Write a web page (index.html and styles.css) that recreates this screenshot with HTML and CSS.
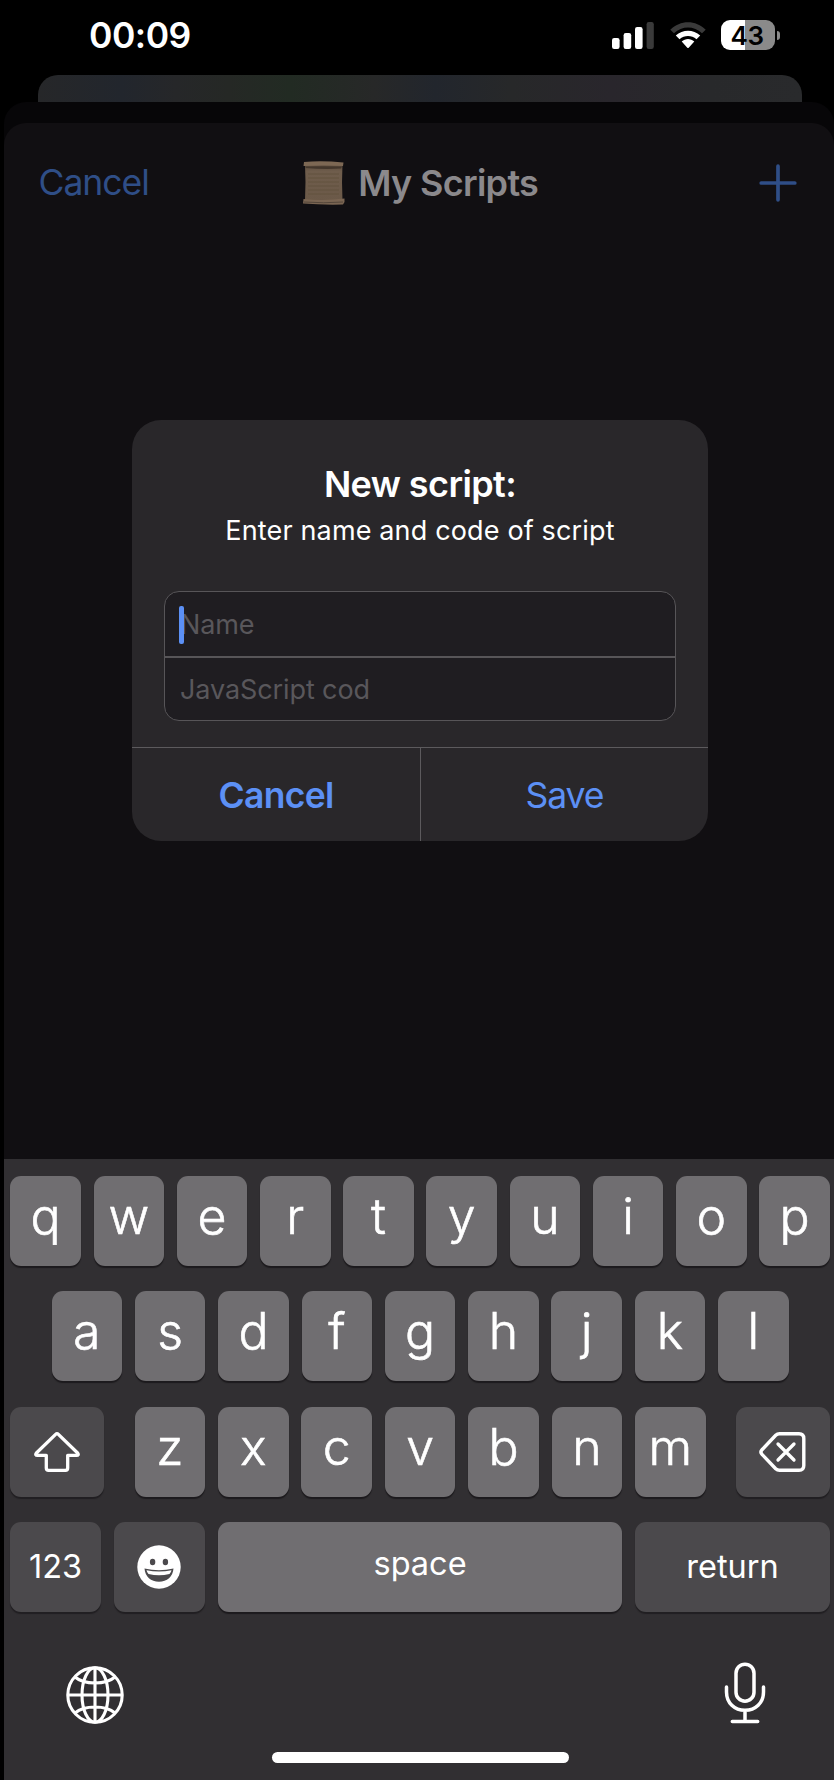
FILE: index.html
```html
<!DOCTYPE html>
<html lang="en">
<head>
<meta charset="utf-8">
<title>My Scripts</title>
<link rel="stylesheet" href="styles.css">
</head>
<body>
<div class="phone">
  <header class="status">
    <span class="clock">00:09</span>
    <div class="indicators">
      <svg class="signal" width="42" height="27" viewBox="0 0 42 27">
        <g fill="#fff"><rect x="0" y="16" width="7.6" height="11" rx="2.2"/><rect x="11.6" y="11" width="7.6" height="16" rx="2.2"/><rect x="23" y="5" width="7.6" height="22" rx="2.2"/></g>
        <rect x="34.6" y="0" width="7.2" height="27" rx="2.2" fill="#3a3a3a"/>
      </svg>
      <svg class="wifi" width="36" height="27" viewBox="0 0 36 27">
        <path d="M0.3 7.8C10.2-2.4 25.8-2.4 35.7 7.8L32 11.2C24 3.6 12 3.6 4 11.2Z" fill="#3a3a3a"/>
        <path d="M5.8 13.5C12.6 7.200 23.400 7.200 30.200 13.500L26.500 17.300C21.500 13 14.500 13 9.500 17.300Z" fill="#fff"/>
        <path d="M11.700 19.600C15.300 16.200 20.700 16.200 24.300 19.600L18.700 25.700Q18 26.500 17.300 25.700Z" fill="#fff"/>
      </svg>
      <div class="battery"><div class="cell">43</div><div class="nub"></div></div>
    </div>
  </header>
  <div class="card-behind"></div>
  <div class="sheet-behind">
    <main class="sheet">
      <nav class="nav">
        <span class="nav-cancel">Cancel</span>
        <div class="nav-title">
          <svg width="44" height="46" viewBox="0 0 44 46">
            <defs><linearGradient id="paper" x1="0" y1="0" x2="0" y2="1"><stop offset="0" stop-color="#57483b"/><stop offset=".2" stop-color="#6f5d4c"/><stop offset="1" stop-color="#6b5948"/></linearGradient></defs>
            <path d="M3 4H40.500Q39.500 22 40.500 41H3Q4 22 3 4Z" fill="url(#paper)"/>
            <path d="M6 14H37M6 18H37M6 22H37M6 26H37M6 30H37M6 34H37" stroke="#63523f" stroke-width="1"/>
            <path d="M2 2Q20 .5 41.500 2.500L41 6Q22 5 1.500 6Z" fill="#7d6854"/>
            <path d="M3 6.500Q20 6 40 6.500L39 8.500Q22 9.500 4 8Z" fill="#44372c"/>
            <path d="M1.500 39Q22 41 42.500 38.500L42.500 42L41 44.500Q20 45 1 43.500Z" fill="#7a6552"/>
            <path d="M2 42Q22 43.500 41 42" stroke="#54463a" fill="none"/>
          </svg>
          <span>My Scripts</span>
        </div>
        <svg class="plus" width="38" height="38" viewBox="0 0 38 38"><path d="M19 2.200V35.800M2.200 19H35.800" stroke="#2f4e87" stroke-width="3.700" stroke-linecap="round"/></svg>
      </nav>
      <section class="alert">
        <h1>New script:</h1>
        <p>Enter name and code of script</p>
        <div class="fields">
          <div class="field"><i class="caret"></i><span>Name</span></div>
          <div class="field"><span>JavaScript cod</span></div>
        </div>
        <div class="actions"><span class="act-cancel">Cancel</span><span class="act-save">Save</span></div>
      </section>
    </main>
  </div>
  <footer class="keyboard">
    <div class="row"><b>q</b><b>w</b><b>e</b><b>r</b><b>t</b><b>y</b><b>u</b><b>i</b><b>o</b><b>p</b></div>
    <div class="row mid"><b>a</b><b>s</b><b>d</b><b>f</b><b>g</b><b>h</b><b>j</b><b>k</b><b>l</b></div>
    <div class="row">
      <div class="fn wide"><svg width="46" height="40" viewBox="0 0 46 40"><path d="M23 1.700Q23.700 1.700 24.400 2.400L43.600 21Q45.300 23.300 42.500 23.300H33.700V36Q33.700 38.300 31.400 38.300H14.600Q12.300 38.300 12.300 36V23.300H3.500Q.7 23.300 2.400 21L21.600 2.400Q22.300 1.700 23 1.700Z" fill="none" stroke="#fff" stroke-width="3.300" stroke-linejoin="round"/></svg></div>
      <div class="letters"><b>z</b><b>x</b><b>c</b><b>v</b><b>b</b><b>n</b><b>m</b></div>
      <div class="fn wide"><svg width="47" height="40" viewBox="0 0 47 40"><path d="M20.500 1.700H40Q44.800 1.700 44.800 6.500V33.500Q44.800 38.300 40 38.300H20.500Q18.300 38.300 16.700 36.700L3 22.300Q.8 20 3 17.700L16.700 3.300Q18.300 1.700 20.500 1.700Z" fill="none" stroke="#fff" stroke-width="3.400"/><path d="M19 12L35 28M35 12L19 28" stroke="#fff" stroke-width="3.300" stroke-linecap="round"/></svg></div>
    </div>
    <div class="row">
      <div class="fn num"><span>123</span></div>
      <div class="fn emoji"><svg width="44" height="44" viewBox="0 0 44 44"><circle cx="22" cy="22" r="21.700" fill="#fff"/><ellipse cx="15.600" cy="17" rx="2.700" ry="3.200" fill="#4b494c"/><ellipse cx="28.400" cy="17" rx="2.700" ry="3.200" fill="#4b494c"/><path d="M7.500 23.500Q22 27 36.500 23.500C36 31.500 30 36.800 22 36.800S8 31.500 7.500 23.500Z" fill="#4b494c"/><path d="M9.500 25.200Q22 28 34.500 25.200Q34 27.500 32.500 29Q22 31.500 11.500 29Q10 27.500 9.500 25.200Z" fill="#fff"/></svg></div>
      <div class="space"><span>space</span></div>
      <div class="fn return"><span>return</span></div>
    </div>
    <div class="tools">
      <svg class="globe" width="58" height="58" viewBox="0 0 58 58" fill="none" stroke="#fff" stroke-width="3.100"><circle cx="29" cy="29" r="27.200"/><ellipse cx="29" cy="29" rx="13" ry="27.200"/><path d="M29 2V56M2 29H56M9 11Q16 17 29 17T49 11M9 47Q16 41 29 41T49 47"/></svg>
      <svg width="42" height="62" viewBox="0 0 42 62" fill="none" stroke="#fff" stroke-width="3.500" stroke-linecap="round"><rect x="12" y="2.200" width="18" height="37" rx="9"/><path d="M2.500 25V30C2.500 41 10.500 48.300 21 48.300S39.500 41 39.500 30V25M21 48.300V59M8.300 59.500H33.700"/></svg>
    </div>
    <div class="home"></div>
  </footer>
</div>
</body>
</html>
```
FILE: styles.css
```css
* { box-sizing: border-box; }
body { margin: 0; background: #000; font-family: Inter, "Liberation Sans", sans-serif; color: #fff; }
svg { display: block; flex: none; }
.phone { width: 830px; height: 1780px; margin-left: 4px; display: flex; flex-direction: column; overflow: hidden; }

.status { height: 75px; padding: 14px 54px 0 85px; display: flex; justify-content: space-between; }
.clock { font-size: 35.500px; font-weight: 600; line-height: 44px; letter-spacing: -0.500px; }
.indicators { display: flex; align-items: flex-start; padding-top: 6px; }
.signal { margin-top: 2px; }
.wifi { margin: 2px 15px 0 16px; }
.battery { display: flex; align-items: center; gap: 2px; height: 30px; }
.cell { width: 54px; height: 30px; padding-right: 2px; border-radius: 9px; background: linear-gradient(90deg, #fff 24px, #8a8a8a 24px); color: #000; font-size: 26px; font-weight: 600; line-height: 31px; letter-spacing: -0.500px; text-align: center; }
.nub { width: 3px; height: 9px; border-radius: 0 4px 4px 0; background: #8a8a8a; }

.card-behind { height: 27px; flex: none; margin: 0 32px 0 34px; border-radius: 20px 20px 0 0; background: linear-gradient(90deg, #262729 0%, #22262d 11%, #262729 18%, #252825 25%, #222b23 33%, #272828 44%, #22262d 52%, #272829 62%, #29262c 75%, #28292b 88%, #292a2c 100%); }
.sheet-behind { flex: none; height: 1057px; padding-top: 21px; border-radius: 22px 22px 0 0; background: #070608; }
.sheet { height: 1036px; border-radius: 22px 22px 0 0; background: #110f12; }

.nav { height: 119px; padding: 0 37px 0 34.500px; display: grid; grid-template-columns: 1fr auto 1fr; align-items: center; font-size: 36px; line-height: 44px; }
.nav-cancel { color: #2f4e87; font-size: 35.500px; letter-spacing: -1px; }
.nav-title { display: flex; align-items: center; gap: 12px; padding-left: 5px; color: #8b898c; font-weight: 600; letter-spacing: -0.700px; }
.plus { justify-self: end; }

.alert { width: 576px; height: 421px; margin: 178px auto 0 128px; border-radius: 29px; background: #29272a; display: flex; flex-direction: column; overflow: hidden; text-align: center; }
.alert h1 { margin: 42px 0 0; font-size: 36px; font-weight: 600; line-height: 44px; letter-spacing: -0.600px; }
.alert p { margin: 7.500px 0 0; font-size: 27px; line-height: 34px; letter-spacing: 0.150px; }
.fields { height: 131px; margin: 43.500px 32px 26px; border: 1.500px solid #575558; border-radius: 15px; background: #1f1d21; text-align: left; }
.field { height: 64px; padding-left: 15px; display: flex; align-items: center; font-size: 27px; letter-spacing: -0.100px; color: #59575b; position: relative; }
.field + .field { border-top: 2px solid #575558; }
.caret { position: absolute; left: 14px; top: 14px; width: 5px; height: 38px; border-radius: 2px; background: #5c90f5; }
.actions { flex: 1; border-top: 1px solid #5c5a5d; display: grid; grid-template-columns: 289px 1fr; font-size: 35.500px; line-height: 95px; color: #5c90f5; }
.act-cancel { font-weight: 600; letter-spacing: -0.700px; border-right: 1px solid #5c5a5d; }
.act-save { letter-spacing: -1px; }

.keyboard { flex: 1; padding: 17px 4px 0 6.300px; background: #312f32; display: flex; flex-direction: column; }
.row { display: flex; justify-content: space-between; height: 90px; margin-bottom: 25.300px; flex: none; }
.mid { padding: 0 41.300px; }
.letters { display: flex; justify-content: space-between; width: 571px; }
.row b { width: 70.500px; height: 90px; font-weight: 300; font-size: 50px; line-height: 81px; text-align: center; -webkit-text-stroke: 0.600px #fff; }
.row b, .space { border-radius: 11px; background: #706e71; box-shadow: 0 2px 1px #1c1a1d; }
.fn { border-radius: 11px; background: #4b494c; box-shadow: 0 2px 1px #211f22; }
.fn, .space { display: flex; align-items: center; justify-content: center; font-size: 32.500px; line-height: 40px; }
.wide { width: 94px; }
.num { width: 90.500px; }
.emoji { width: 91.500px; }
.space { width: 404px; padding-bottom: 5px; }
.return { width: 195px; }
.tools { display: flex; justify-content: space-between; align-items: center; padding: 0 64px 0 55.500px; margin-top: 25px; height: 62px; flex: none; }
.globe { margin-top: 3px; }
.home { width: 297px; height: 11px; border-radius: 6px; background: #fff; margin: 28px 0 0 262px; }
```
